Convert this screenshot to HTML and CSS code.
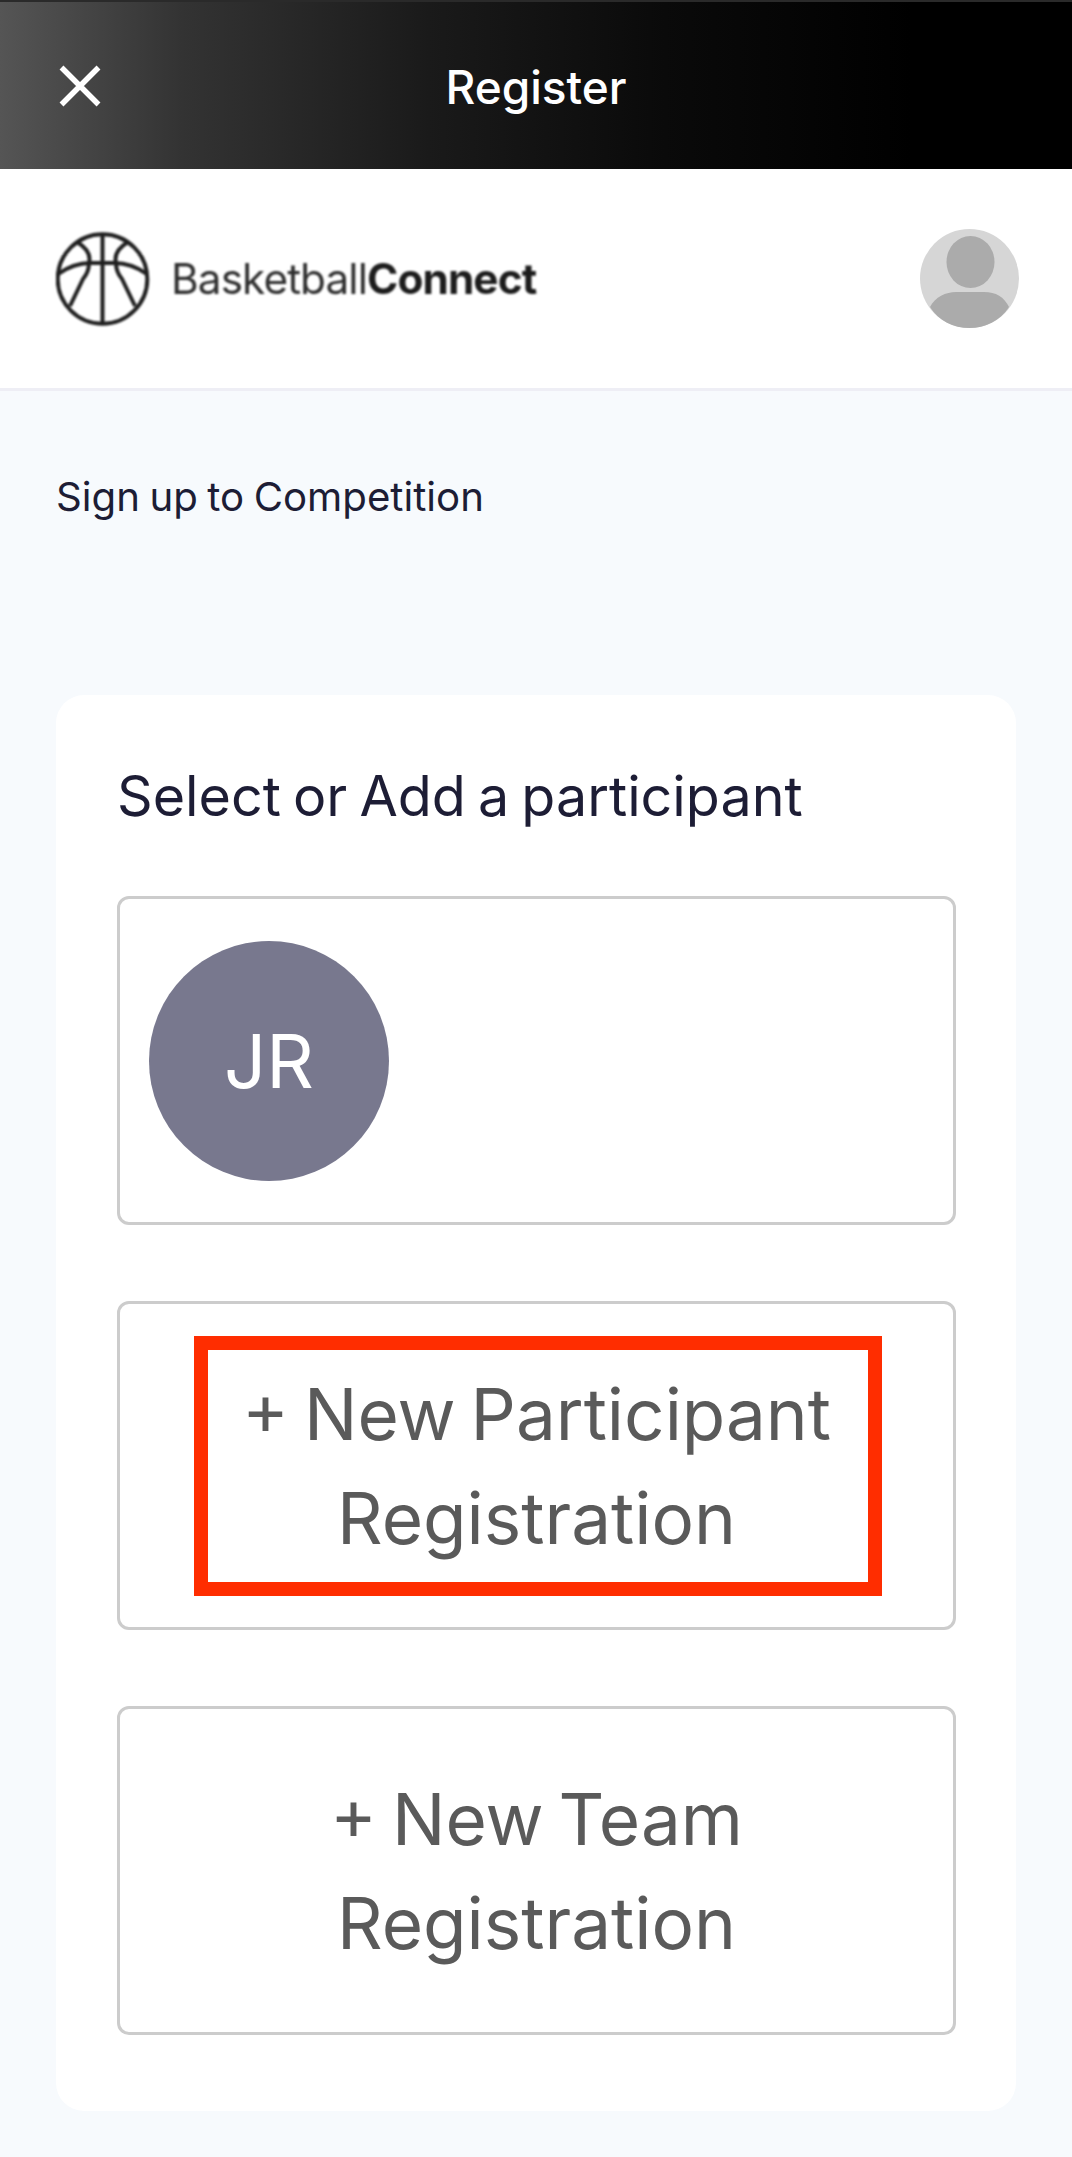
FILE: index.html
```html
<!DOCTYPE html>
<html lang="en">
<head>
<meta charset="utf-8">
<title>Register</title>
<link rel="stylesheet" href="styles.css">
</head>
<body>
<header class="topbar">
  <svg class="close" viewBox="0 0 42 42" aria-hidden="true"><path d="M2.5 2.5 L39.5 39.5 M39.5 2.5 L2.5 39.5"/></svg>
  <h1 class="topbar-title">Register</h1>
</header>
<div class="brandbar">
  <div class="logo">
    <svg class="ball" viewBox="0 0 94 94" aria-hidden="true">
      <circle cx="46.5" cy="47" r="44.8"/>
      <path d="M46.5 2 V92"/>
      <path d="M2 42 Q18 31 34 31 H59 Q75 31 91 42"/>
      <path d="M21 10 Q36 19 33 31 Q33 40 27 47 L14 74"/>
      <path d="M72 10 Q57 19 60 31 Q60 40 66 47 L79 74"/>
    </svg>
    <span class="wordmark">Basketball<b>Connect</b></span>
  </div>
  <svg class="user" viewBox="0 0 99 99" aria-hidden="true">
    <circle class="user-bg" cx="49.5" cy="49.5" r="49.5"/>
    <ellipse class="user-fg" cx="50.5" cy="33" rx="24" ry="26"/>
    <path class="user-fg" d="M10 78 C15 68 26 63 36 63 H64 C76 63 84 68 89 78 C80 92 65 99 49.5 99 C33 99 19 92 10 78 Z"/>
  </svg>
</div>
<main class="page">
  <p class="crumb">Sign up to Competition</p>
  <section class="card">
    <h2 class="card-title">Select or Add a participant</h2>
    <div class="tile tile-person">
      <div class="initials">JR</div>
    </div>
    <div class="tile tile-action">
      <span class="highlight"></span>
      + New Participant Registration
    </div>
    <div class="tile tile-action">+ New Team Registration</div>
  </section>
</main>
</body>
</html>
```
FILE: styles.css
```css
* { box-sizing: border-box; }
html, body { margin: 0; padding: 0; }
body {
  width: 1072px;
  height: 2157px;
  overflow: hidden;
  background: #f7fafd;
  font-family: Inter, "Liberation Sans", sans-serif;
}
.topbar {
  height: 169px;
  display: flex;
  align-items: center;
  justify-content: center;
  position: relative;
  background: linear-gradient(90deg, #555 0%, #333 17%, #1a1a1a 40%, #0a0a0a 62%, #000 85%);
  border-top: 2px solid #2a2a2a;
}
.close {
  position: absolute;
  left: 59px;
  top: 63px;
  width: 42px;
  height: 42px;
  fill: none;
  stroke: #fff;
  stroke-width: 5.5;
}
.topbar-title {
  margin: 2px 0 0;
  color: #fff;
  font-size: 46px;
  font-weight: 500;
  line-height: 1;
}
.brandbar {
  height: 222px;
  background: #fff;
  border-bottom: 3px solid #eeeef5;
  display: flex;
  align-items: center;
  justify-content: space-between;
  padding: 0 53px 0 56px;
}
.logo {
  display: flex;
  align-items: center;
  gap: 21px;
  filter: blur(0.8px);
}
.ball {
  width: 94px;
  height: 94px;
  fill: none;
  stroke: #1f1f1f;
  stroke-width: 4;
}
.wordmark {
  font-size: 42.3px;
  color: #2f2f2f;
  letter-spacing: -0.9px;
}
.wordmark b { font-weight: 700; color: #1c1c1c; }
.user { width: 99px; height: 99px; }
.user-bg { fill: #d6d6d6; }
.user-fg { fill: #ababab; }
.page { padding: 0 56px; }
.crumb {
  margin: 0;
  padding-top: 82px;
  height: 304px;
  font-size: 40.2px;
  line-height: 48px;
  word-spacing: -1.8px;
  color: #1d1d35;
}
.card {
  background: #fff;
  border-radius: 28px;
  padding: 70px 60px 76px 61px;
  display: flex;
  flex-direction: column;
  gap: 76px;
}
.card-title {
  margin: 0 0 -7px;
  font-size: 55.6px;
  font-weight: 400;
  line-height: 62px;
  word-spacing: -3.5px;
  color: #1d1d35;
}
.tile {
  position: relative;
  height: 329px;
  border: 3.5px solid #ccc;
  border-radius: 12px;
  background: #fff;
  display: flex;
  align-items: center;
}
.tile-person { padding-left: 29px; }
.initials {
  width: 240px;
  height: 240px;
  border-radius: 50%;
  background: #78788e;
  color: #fff;
  font-size: 74px;
  display: flex;
  align-items: center;
  justify-content: center;
}
.tile-action {
  padding: 0 90px;
  justify-content: center;
  text-align: center;
  font-size: 71px;
  line-height: 104px;
  word-spacing: -5px;
  color: #5a5a5a;
}
.highlight {
  position: absolute;
  left: 74px;
  top: 32px;
  width: 688px;
  height: 260px;
  border: 14px solid #ff2d00;
}
```
